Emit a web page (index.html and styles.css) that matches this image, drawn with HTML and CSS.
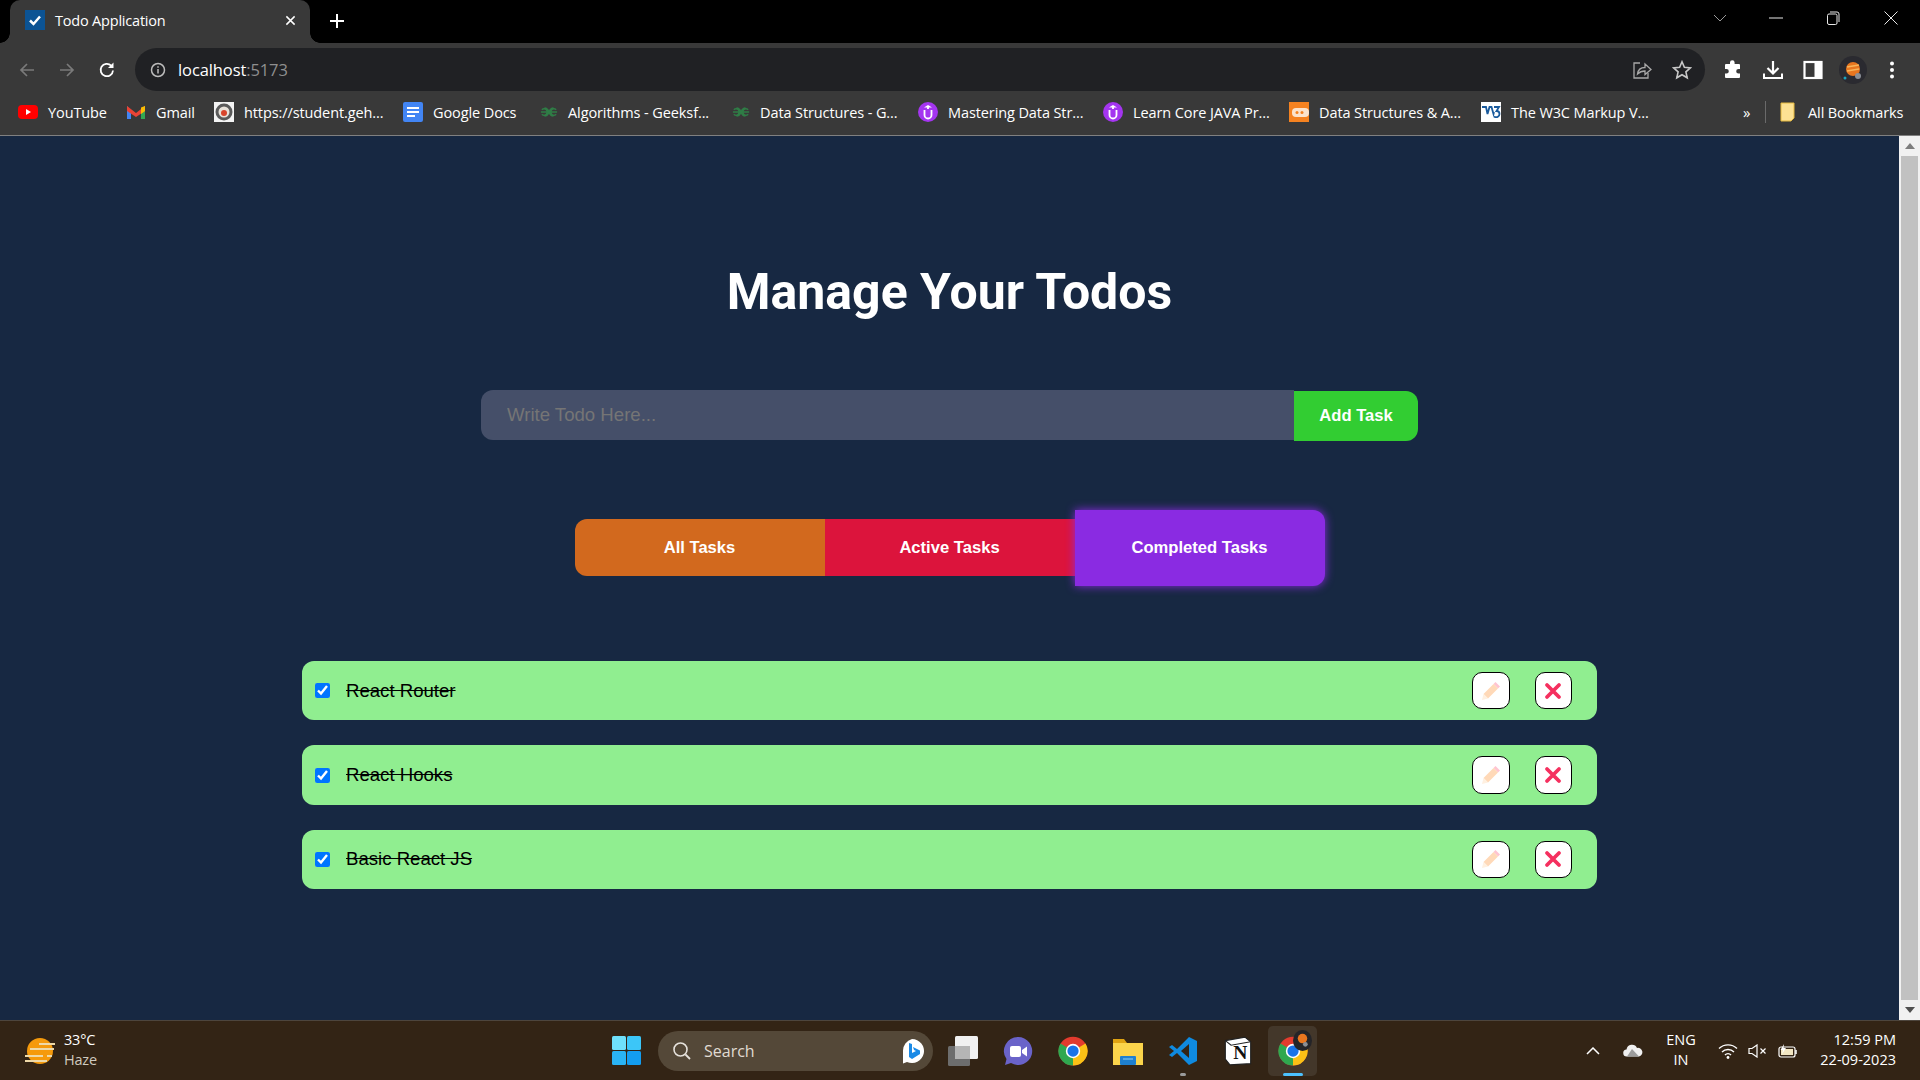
FILE: index.html
```html
<!DOCTYPE html>
<html lang="en">
<head>
  <meta charset="UTF-8" />
  <meta name="viewport" content="width=device-width, initial-scale=1.0"/>
  <title>Todo Application</title>
  <link rel="stylesheet" href="styles.css">
</head>
<body>
  <svg class="defs" width="0" height="0">
    <symbol id="chrome" viewBox="0 0 48 48">
      <circle cx="24" cy="24" r="23" fill="#e33b2e"/>
      <path d="M24 24 L44 12 A23 23 0 0 1 24 47 Z" fill="#fbc116"/>
      <path d="M24 24 L24 47 A23 23 0 0 1 4 12 Z" fill="#2fa84f"/>
      <circle cx="24" cy="24" r="11.5" fill="#fff"/>
      <circle cx="24" cy="24" r="9" fill="#1a73e8"/>
    </symbol>
    <symbol id="gfg" viewBox="0 0 20 12">
      <path d="M1 6h18M2 3.500a3.500 3.500 0 1 1 0 5M18 3.500a3.500 3.500 0 1 0 0 5M10 6C9 3 7 1.500 5 1.500M10 6c1-3 3-4.500 5-4.500M10 6c-1 3-3 4.500-5 4.500M10 6c1 3 3 4.500 5 4.500" fill="none" stroke="#2f7d46" stroke-width="1.500"/>
    </symbol>
    <symbol id="udemy" viewBox="0 0 20 20">
      <circle cx="10" cy="10" r="10" fill="#a435f0"/>
      <path d="M6.500 8v5a3.500 3.500 0 0 0 7 0V8M10 7V4" fill="none" stroke="#fff" stroke-width="1.800"/>
      <path d="M10 3l4 2.500H6z" fill="#fff"/>
    </symbol>
    <symbol id="pencil" viewBox="0 0 20 20">
      <path d="M14.500 1l4.500 4.500-2 2L12.500 3z" fill="#ffc4d0"/>
      <path d="M12.500 3L17 7.500 7 17.500 2.500 13z" fill="#ffd9b8"/>
      <path d="M2.500 13L7 17.500 1 19z" fill="#fff0e0"/>
    </symbol>
    <symbol id="cross" viewBox="0 0 20 20">
      <path d="M4 4l12 12M16 4L4 16" fill="none" stroke="#f5305f" stroke-width="3.800" stroke-linecap="round"/>
    </symbol>
  </svg>

  <div class="tab-strip">
    <div class="tab">
      <svg class="favicon" viewBox="0 0 20 20">
        <rect width="20" height="20" fill="#0b5394"/>
        <path d="M5 10.500l3.500 3.500L15 6.500" fill="none" stroke="#fff" stroke-width="2.500"/>
      </svg>
      <span class="tab-title">Todo Application</span>
      <svg class="tab-close" viewBox="0 0 12 12"><path d="M1.500 1.500l9 9M10.500 1.500l-9 9" stroke="#fff" stroke-width="1.600"/></svg>
    </div>
    <svg class="new-tab" viewBox="0 0 16 16"><path d="M8 1v14M1 8h14" stroke="#fff" stroke-width="2"/></svg>
    <div class="window-controls">
      <svg viewBox="0 0 14 8" class="win-chevron"><path d="M1 1l6 6 6-6" fill="none" stroke="#9a9a9a"/></svg>
      <svg viewBox="0 0 14 14" class="win-min"><path d="M0 7h14" stroke="#e8e8e8"/></svg>
      <svg viewBox="0 0 14 14" class="win-restore"><rect x="1.500" y="3" width="9.500" height="10.500" rx="1.500" fill="none" stroke="#e8e8e8"/><path d="M4 1h7a2 2 0 0 1 2 2v8" fill="none" stroke="#e8e8e8"/></svg>
      <svg viewBox="0 0 14 14" class="win-close"><path d="M.5.5l13 13M13.500.5l-13 13" stroke="#e8e8e8"/></svg>
    </div>
  </div>

  <div class="toolbar">
    <div class="nav-buttons">
      <svg viewBox="0 0 18 18"><path d="M16 9H3M9 3L3 9l6 6" fill="none" stroke="#7a7a7a" stroke-width="1.700"/></svg>
      <svg viewBox="0 0 18 18"><path d="M2 9h13M9 3l6 6-6 6" fill="none" stroke="#7a7a7a" stroke-width="1.700"/></svg>
      <svg viewBox="0 0 18 18"><path d="M15 9.500A6.200 6.200 0 1 1 13.200 4.600" fill="none" stroke="#fff" stroke-width="1.800"/><path d="M15.500 1.500v5.500H10z" fill="#fff"/></svg>
    </div>
    <div class="address-bar">
      <svg class="info-icon" viewBox="0 0 16 16"><circle cx="8" cy="8" r="6.500" fill="none" stroke="#bdbdbd" stroke-width="1.500"/><path d="M8 7v4.500M8 4.300v1.500" stroke="#bdbdbd" stroke-width="1.500"/></svg>
      <span class="url">localhost<span class="url-port">:5173</span></span>
      <svg class="share-icon" viewBox="0 0 20 20"><path d="M8 3H2v15h14v-5" fill="none" stroke="#a8a8a8" stroke-width="1.300"/><path d="M5.500 14c.5-4 3.500-6.500 7.500-6.500V4l6 5.500-6 5V11c-3 0-5.500 1-7.500 3z" fill="none" stroke="#a8a8a8" stroke-width="1.300"/></svg>
      <svg class="star-icon" viewBox="0 0 20 20"><path d="M10 1.800l2.400 5.500 6 .6-4.500 4 1.300 5.900L10 14.700l-5.200 3.100 1.300-5.900-4.500-4 6-.6z" fill="none" stroke="#c8c8c8" stroke-width="1.600"/></svg>
    </div>
    <div class="toolbar-actions">
      <svg viewBox="0 0 20 20"><path d="M7 2.500a2.300 2.300 0 0 1 4.600 0V4H16a1 1 0 0 1 1 1v4h-1.500a2.300 2.300 0 0 0 0 4.600H17V17a1 1 0 0 1-1 1H3a1 1 0 0 1-1-1v-3.500h1.500a2.300 2.300 0 0 0 0-4.600H2V5a1 1 0 0 1 1-1h4z" fill="#fff"/></svg>
      <svg viewBox="0 0 20 20"><path d="M10 1v12M4.500 8l5.500 5.500L15.500 8" fill="none" stroke="#fff" stroke-width="2.200"/><path d="M1 13.500v4.500h18v-4.500" fill="none" stroke="#fff" stroke-width="2"/></svg>
      <svg viewBox="0 0 20 20"><rect x="1.500" y="2" width="17" height="16" fill="none" stroke="#fff" stroke-width="2.200"/><rect x="11.500" y="2" width="7" height="16" fill="#fff"/></svg>
      <svg class="avatar" viewBox="0 0 28 28">
        <circle cx="14" cy="14" r="14" fill="#2a2a30"/>
        <circle cx="14" cy="13" r="7" fill="#e8761f"/>
        <path d="M8 11l12-2M8 15l12-2" stroke="#f7b45a" stroke-width="1.500"/>
        <circle cx="19" cy="20" r="3" fill="#8a8f96"/>
        <circle cx="6" cy="22" r="1.500" fill="#19a5c0"/>
      </svg>
      <svg class="kebab" viewBox="0 0 6 20"><circle cx="3" cy="3.500" r="2" fill="#fff"/><circle cx="3" cy="10" r="2" fill="#fff"/><circle cx="3" cy="16.500" r="2" fill="#fff"/></svg>
    </div>
  </div>

  <div class="bookmarks">
    <a class="bookmark">
      <svg viewBox="0 0 20 20"><rect y="3" width="20" height="14" rx="4" fill="#f00"/><path d="M8 7l5 3-5 3z" fill="#fff"/></svg>
      <span>YouTube</span>
    </a>
    <a class="bookmark">
      <svg viewBox="0 0 20 20"><path d="M1 4v13h4V9z" fill="#4285f4"/><path d="M19 4v13h-4V9z" fill="#34a853"/><path d="M1 4l9 7 9-7v5l-9 6-9-6z" fill="#ea4335"/><path d="M15 5.500l4-1.500v5l-4 3z" fill="#fbbc04"/></svg>
      <span>Gmail</span>
    </a>
    <a class="bookmark">
      <svg viewBox="0 0 20 20"><rect width="20" height="20" fill="#f4f4f4"/><circle cx="10" cy="10" r="8.500" fill="#5a5a5a"/><circle cx="10" cy="10" r="5.500" fill="#e8e2da"/><circle cx="10" cy="11" r="3" fill="#d8452c"/></svg>
      <span>https://student.geh...</span>
    </a>
    <a class="bookmark">
      <svg viewBox="0 0 20 20"><rect width="20" height="20" rx="2" fill="#4285f4"/><path d="M4 6h12M4 10h12M4 14h8" stroke="#fff" stroke-width="2"/></svg>
      <span>Google Docs</span>
    </a>
    <a class="bookmark">
      <svg class="gfg-icon"><use href="#gfg"/></svg>
      <span>Algorithms - Geeksf...</span>
    </a>
    <a class="bookmark">
      <svg class="gfg-icon"><use href="#gfg"/></svg>
      <span>Data Structures - G...</span>
    </a>
    <a class="bookmark">
      <svg><use href="#udemy"/></svg>
      <span>Mastering Data Str...</span>
    </a>
    <a class="bookmark">
      <svg><use href="#udemy"/></svg>
      <span>Learn Core JAVA Pr...</span>
    </a>
    <a class="bookmark">
      <svg viewBox="0 0 20 20"><rect width="20" height="20" fill="#f58220"/><rect x="3" y="6" width="17" height="9" rx="4" fill="#fbe3cc"/><circle cx="8" cy="10.500" r="1.500" fill="#f58220"/><circle cx="13" cy="10.500" r="1.500" fill="#f58220"/></svg>
      <span>Data Structures &amp; A...</span>
    </a>
    <a class="bookmark">
      <svg viewBox="0 0 20 20"><rect width="20" height="20" fill="#fff"/><path d="M1 5h4l1.500 7L8.500 5h2l2 7 .5-2" fill="none" stroke="#1a5a9c" stroke-width="1.800"/><path d="M13 5h5l-2.500 4c2 0 3 1 3 3 0 3-3 4-5.500 2.500" fill="none" stroke="#1a5a9c" stroke-width="1.800"/></svg>
      <span>The W3C Markup V...</span>
    </a>
    <span class="bm-more">»</span>
    <span class="bm-sep"></span>
    <a class="bookmark bm-all">
      <svg class="folder-icon" viewBox="0 0 15 20"><path d="M1 1h13v15l-3 3H1z" fill="#fde293" stroke="#e5b93f"/></svg>
      <span>All Bookmarks</span>
    </a>
  </div>

  <div class="viewport">
    <main class="app">
      <h1 class="app-title">Manage Your Todos</h1>

      <form class="todo-form">
        <input class="todo-input" type="text" placeholder="Write Todo Here..." />
        <button class="add-btn" type="button">Add Task</button>
      </form>

      <div class="filters">
        <button class="filter-btn filter-all" type="button">All Tasks</button>
        <button class="filter-btn filter-active" type="button">Active Tasks</button>
        <button class="filter-btn filter-completed" type="button">Completed Tasks</button>
      </div>

      <ul class="todo-list">
        <li class="todo-item">
          <input class="todo-check" type="checkbox" checked />
          <span class="todo-text">React Router</span>
          <button class="icon-btn" type="button"><svg><use href="#pencil"/></svg></button>
          <button class="icon-btn" type="button"><svg><use href="#cross"/></svg></button>
        </li>
        <li class="todo-item">
          <input class="todo-check" type="checkbox" checked />
          <span class="todo-text">React Hooks</span>
          <button class="icon-btn" type="button"><svg><use href="#pencil"/></svg></button>
          <button class="icon-btn" type="button"><svg><use href="#cross"/></svg></button>
        </li>
        <li class="todo-item">
          <input class="todo-check" type="checkbox" checked />
          <span class="todo-text">Basic React JS</span>
          <button class="icon-btn" type="button"><svg><use href="#pencil"/></svg></button>
          <button class="icon-btn" type="button"><svg><use href="#cross"/></svg></button>
        </li>
      </ul>
    </main>

    <div class="scrollbar">
      <div class="scroll-arrow"><span class="arrow-up"></span></div>
      <div class="scroll-thumb"></div>
      <div class="scroll-arrow"><span class="arrow-down"></span></div>
    </div>
  </div>

  <footer class="taskbar">
    <div class="weather">
      <svg class="weather-icon" viewBox="0 0 30 26">
        <ellipse cx="15" cy="13" rx="13" ry="13" fill="#f59a0c"/>
        <path d="M14 6h16M5 11h24M0 18h18M22 18h5M0 23h22" stroke="#eed9a8" stroke-width="2.200"/>
      </svg>
      <div class="weather-text">
        <span class="weather-temp">33°C</span>
        <span class="weather-desc">Haze</span>
      </div>
    </div>

    <svg class="start" viewBox="0 0 29 29">
      <rect width="14" height="14" rx="1.500" fill="#6fe0fb"/>
      <rect x="15" width="14" height="14" rx="1.500" fill="#3cc6f8"/>
      <rect y="15" width="14" height="14" rx="1.500" fill="#2ab4f5"/>
      <rect x="15" y="15" width="14" height="14" rx="1.500" fill="#139df0"/>
    </svg>

    <div class="search">
      <svg class="search-icon" viewBox="0 0 20 20"><circle cx="8.500" cy="8.500" r="6.500" fill="none" stroke="#e6e2dc" stroke-width="1.600"/><path d="M13.500 13.500L18 18" stroke="#e6e2dc" stroke-width="1.800"/></svg>
      <span>Search</span>
      <svg class="bing" viewBox="0 0 26 26"><path d="M13 1a12 12 0 1 1-5 22.900L4 25.500V13A12 12 0 0 1 13 1z" fill="#fff"/><path d="M10 5l3 1v9l4-2-2-1-1-3 7 3.500v3.500l-8 5-3-2z" fill="#1a8ae6"/></svg>
    </div>

    <div class="task-icons">
      <div class="task-item">
        <svg viewBox="0 0 30 30"><rect y="10" width="22" height="20" rx="1.500" fill="#6d6d6d"/><rect x="7" width="23" height="23" rx="1.500" fill="#f1f1f1"/><rect x="7" y="10" width="15" height="13" fill="#b5b5b5"/></svg>
      </div>
      <div class="task-item">
        <svg viewBox="0 0 30 30"><path d="M15 1a14 14 0 1 1-7 26L2 29l1.500-6A14 14 0 0 1 15 1z" fill="#6a63c9"/><rect x="7" y="10" width="11" height="11" rx="2" fill="#fff"/><path d="M19 14l5-3.500v10L19 17z" fill="#fff"/></svg>
      </div>
      <div class="task-item">
        <svg><use href="#chrome"/></svg>
      </div>
      <div class="task-item">
        <svg viewBox="0 0 30 30"><path d="M0 3h11l3 4h-14z" fill="#e0a312"/><rect y="7" width="30" height="22" fill="#fbd44b"/><rect x="7" y="20" width="16" height="9" rx="1" fill="#1e80d0"/><path d="M10 23h10" stroke="#8fd0f5"/></svg>
      </div>
      <div class="task-item task-open">
        <svg viewBox="0 0 30 30"><path d="M21 1l8 4v20l-8 4L9 17l-5 4-3-2 5-4-5-4 3-2 5 4z" fill="#0f8ae0"/><path d="M21 8v14l-8-7z" fill="#332415"/></svg>
      </div>
      <div class="task-item">
        <svg viewBox="0 0 26 26"><path d="M2 4l17-3 5 4v19l-18 1-4-5z" fill="#fff" stroke="#222" stroke-width="1"/><path d="M2 4l5 4 17-3" fill="none" stroke="#222" stroke-width="1"/><text class="notion-n" x="15" y="20" text-anchor="middle">N</text></svg>
      </div>
      <div class="task-item task-active">
        <svg><use href="#chrome"/></svg>
        <svg class="task-badge" viewBox="0 0 20 22"><ellipse cx="10" cy="11" rx="10" ry="11" fill="#242428"/><circle cx="10" cy="9" r="5" fill="#e8761f"/><circle cx="13" cy="15" r="2.500" fill="#8a8f96"/></svg>
      </div>
    </div>

    <div class="tray">
      <svg class="tray-chevron" viewBox="0 0 14 8"><path d="M1 7l6-6 6 6" fill="none" stroke="#fff" stroke-width="1.500"/></svg>
      <svg class="tray-cloud" viewBox="0 0 20 13"><path d="M4 12.500a3.500 3.500 0 0 1-.5-7A5.500 5.500 0 0 1 14 4a4.300 4.300 0 0 1 2 8.500z" fill="#f0f0f0"/><path d="M9 5l7 7.500H4z" fill="#9c9c9c"/></svg>
      <div class="tray-lang"><span>ENG</span><span>IN</span></div>
      <svg class="tray-wifi" viewBox="0 0 20 16"><path d="M1 5.500a13 13 0 0 1 18 0M4 9a8.500 8.500 0 0 1 12 0M7 12a4 4 0 0 1 6 0" fill="none" stroke="#fff" stroke-width="1.400"/><circle cx="10" cy="14.500" r="1.400" fill="#fff"/></svg>
      <svg class="tray-sound" viewBox="0 0 20 14"><path d="M1 4.500h3L9 1v12L4 9.500H1z" fill="none" stroke="#fff" stroke-width="1.200"/><path d="M12.500 4.500l5 5M17.500 4.500l-5 5" stroke="#fff" stroke-width="1.200"/></svg>
      <svg class="tray-battery" viewBox="0 0 20 14"><rect x="1" y="3" width="16" height="10" rx="2" fill="none" stroke="#fff" stroke-width="1.200"/><rect x="3" y="5" width="12" height="6" fill="#f2e6c2"/><path d="M18 6v4" stroke="#fff" stroke-width="1.500"/><path d="M6 0L2.500 6H5L4 10l4-6H5.500z" fill="#fff"/></svg>
      <div class="tray-clock"><span>12:59 PM</span><span>22-09-2023</span></div>
    </div>
  </footer>
</body>
</html>
```

FILE: styles.css
```css
* {
  box-sizing: border-box;
}

html, body {
  margin: 0;
  height: 100%;
}

body {
  display: flex;
  flex-direction: column;
  height: 1080px;
  overflow: hidden;
  background-color: #172842;
  font-family: "Open Sans", "Noto Sans", sans-serif;
  color: #fff;
}

svg {
  display: block;
  flex: none;
}

.defs {
  position: absolute;
}

/* browser chrome */
.tab-strip {
  display: flex;
  align-items: center;
  height: 43px;
  padding-left: 10px;
  background-color: #000;
}

.tab {
  position: relative;
  display: flex;
  align-items: center;
  width: 300px;
  height: 43px;
  padding: 0 14px 3px 15px;
  background-color: #393939;
  border-radius: 10px 10px 0 0;
}

/* the little flares at the tab's bottom corners */
.tab::before,
.tab::after {
  content: "";
  position: absolute;
  bottom: 0;
  width: 10px;
  height: 10px;
}

.tab::before {
  left: -10px;
  background: radial-gradient(circle at 0 0, #000 9.5px, #393939 10px);
}

.tab::after {
  right: -10px;
  background: radial-gradient(circle at 100% 0, #000 9.5px, #393939 10px);
}

.favicon {
  width: 20px;
  height: 20px;
}

.tab-title {
  margin-left: 10px;
  font-size: 14.5px;
  letter-spacing: -0.2px;
  flex: 1;
}

.tab-close {
  width: 11px;
  height: 11px;
}

.new-tab {
  width: 16px;
  height: 16px;
  margin-left: 19px;
  margin-bottom: 2px;
}

.window-controls {
  display: flex;
  align-items: center;
  align-self: flex-start;
  margin-left: auto;
  height: 36px;
}

.win-chevron {
  width: 14px;
  height: 8px;
}

.win-min {
  width: 14px;
  height: 14px;
  margin-left: 42px;
}

.win-restore {
  width: 14px;
  height: 16px;
  margin-left: 43px;
}

.win-close {
  width: 14px;
  height: 14px;
  margin-left: 44px;
  margin-right: 22px;
}

.toolbar {
  display: flex;
  align-items: center;
  height: 48px;
  padding-top: 5px;
  background-color: #393939;
}

.nav-buttons {
  display: flex;
  align-items: center;
  gap: 22px;
  width: 135px;
  padding-left: 18px;
}

.nav-buttons svg {
  width: 18px;
  height: 18px;
}

.address-bar {
  display: flex;
  align-items: center;
  width: 1570px;
  height: 43px;
  padding: 0 13px 0 15px;
  background-color: #202124;
  border-radius: 22px;
}

.info-icon {
  width: 16px;
  height: 16px;
}

.url {
  margin-left: 12px;
  margin-bottom: 1px;
  font-size: 16.5px;
  letter-spacing: -0.1px;
  flex: 1;
}

.url-port {
  color: #8f8f8f;
}

.share-icon {
  width: 20px;
  height: 20px;
}

.star-icon {
  width: 20px;
  height: 20px;
  margin-left: 20px;
}

.toolbar-actions {
  display: flex;
  align-items: center;
  padding-left: 18px;
}

.toolbar-actions svg {
  width: 20px;
  height: 20px;
  margin-right: 20px;
}

.toolbar-actions .avatar {
  width: 28px;
  height: 28px;
  margin-right: 0;
  margin-left: -4px;
}

.toolbar-actions .kebab {
  width: 6px;
  margin: 0 0 0 22px;
}

.bookmarks {
  display: grid;
  grid-template-columns: 108px 88px 189px 137px 192px 186px 185px 186px 192px 262px 22px 15px auto;
  align-items: center;
  height: 45px;
  padding: 0 0 2px 18px;
  background-color: #393939;
  border-bottom: 1px solid #808080;
  font-size: 14.5px;
  letter-spacing: -0.1px;
}

.bookmark {
  display: flex;
  align-items: center;
  gap: 10px;
  white-space: nowrap;
}

.bookmark svg {
  width: 20px;
  height: 20px;
}

.bookmark .gfg-icon {
  width: 18px;
}

.bookmark .folder-icon {
  width: 15px;
}

.bm-all {
  gap: 13px;
}

.bm-more {
  font-size: 15px;
}

.bm-sep {
  width: 1px;
  height: 22px;
  background-color: #6a6a6a;
}

/* page */
.viewport {
  display: flex;
  flex: 1;
  min-height: 0;
}

.app {
  flex: 1;
  display: flex;
  flex-direction: column;
  align-items: center;
  padding-top: 132px;
  font-family: "Liberation Sans", Arial, sans-serif;
}

.app-title {
  margin: 0 0 74px;
  font-family: Roboto, sans-serif;
  font-size: 50px;
  line-height: 48px;
  font-weight: 700;
}

.todo-form {
  display: flex;
  width: 937px;
  height: 51px;
  margin-bottom: 69px;
}

.todo-input {
  flex: 1;
  height: 50px;
  padding: 0 26px;
  border: none;
  border-radius: 12px 0 0 12px;
  background-color: #454f69;
  color: #fff;
  font-family: inherit;
  font-size: 18.6px;
  outline: none;
}

.todo-input::placeholder {
  color: #757575;
}

.add-btn {
  width: 124px;
  height: 50px;
  margin-top: 1px;
  border: none;
  border-radius: 0 12px 12px 0;
  background-color: #32cd32;
  color: #fff;
  font-family: inherit;
  font-size: 16.6px;
  font-weight: bold;
}

.filters {
  display: flex;
  align-items: flex-start;
  height: 76px;
  margin-bottom: 75px;
}

.filter-btn {
  width: 250px;
  height: 57px;
  margin-top: 9px;
  border: none;
  color: #fff;
  font-family: inherit;
  font-size: 16.6px;
  font-weight: bold;
}

.filter-all {
  background-color: #d2691e;
  border-radius: 12px 0 0 12px;
}

.filter-active {
  background-color: #dc143c;
}

.filter-completed {
  height: 76px;
  margin-top: 0;
  background-color: #8a2be2;
  border-radius: 0 12px 12px 0;
  box-shadow: 0 0 10px #8a2be2;
}

.todo-list {
  display: flex;
  flex-direction: column;
  gap: 25px;
  width: 1295px;
  margin: 0;
  padding: 0;
  list-style: none;
}

.todo-item {
  display: flex;
  align-items: center;
  height: 59.4px;
  padding: 0 25px 0 13px;
  background-color: #90ee90;
  border-radius: 12px;
  color: #000;
}

.todo-check {
  width: 15px;
  height: 15px;
  margin: 0 16px 0 0;
}

.todo-text {
  flex: 1;
  font-size: 18.6px;
  text-decoration: line-through;
}

.icon-btn {
  display: flex;
  align-items: center;
  justify-content: center;
  width: 37.500px;
  height: 37.500px;
  padding: 0;
  margin-left: 25px;
  border: 1px solid #000;
  border-radius: 10px;
  background-color: #fff;
}

.icon-btn svg {
  width: 20px;
  height: 20px;
}

.scrollbar {
  display: flex;
  flex-direction: column;
  width: 21px;
  background-color: #f1f1f1;
}

.scroll-arrow {
  display: flex;
  align-items: center;
  justify-content: center;
  height: 20px;
}

.arrow-up {
  border: 5px solid transparent;
  border-top: 0;
  border-bottom: 6px solid #7d7d7d;
}

.arrow-down {
  border: 5px solid transparent;
  border-bottom: 0;
  border-top: 6px solid #505050;
}

.scroll-thumb {
  flex: 1;
  margin: 0 2px;
  background-color: #c1c1c1;
}

/* windows taskbar */
.taskbar {
  position: relative;
  display: flex;
  align-items: center;
  height: 60px;
  background-color: #332415;
  border-top: 1px solid #4d453d;
  font-size: 14.5px;
}

.weather {
  display: flex;
  align-items: center;
  width: 612px;
  padding-left: 25px;
}

.weather-icon {
  width: 30px;
  height: 26px;
}

.weather-text {
  display: flex;
  flex-direction: column;
  margin: 0 0 2px 9px;
  line-height: 20px;
  letter-spacing: -0.2px;
}

.weather-desc {
  color: #cfcabf;
}

.start {
  width: 29px;
  height: 29px;
}

.search {
  display: flex;
  align-items: center;
  width: 275px;
  height: 40px;
  margin-left: 17px;
  padding: 0 8px 0 14px;
  background-color: #544838;
  border-radius: 20px;
  color: #e0dbd2;
  font-size: 16px;
}

.search-icon {
  width: 20px;
  height: 20px;
  margin-right: 12px;
}

.search span {
  flex: 1;
}

.bing {
  width: 26px;
  height: 26px;
}

.task-icons {
  display: flex;
  align-items: center;
  margin-left: 2px;
}

.task-item {
  position: relative;
  display: flex;
  align-items: center;
  justify-content: center;
  width: 55px;
  height: 50px;
}

.task-item svg {
  width: 30px;
  height: 30px;
}

.task-open::after,
.task-active::after {
  content: "";
  position: absolute;
  bottom: 0;
  height: 3px;
  border-radius: 2px;
}

.task-open::after {
  width: 6px;
  background-color: #9b9b9b;
}

.task-active::after {
  width: 20px;
  background-color: #4cc2ff;
}

.task-active {
  width: 49px;
  margin-left: 3px;
  background-color: #43372a;
  border-radius: 5px;
}

.task-item .task-badge {
  position: absolute;
  top: 4px;
  right: 5px;
  width: 19px;
  height: 21px;
}

.notion-n {
  font-family: "Liberation Serif", serif;
  font-size: 17px;
  font-weight: bold;
  fill: #111;
}

.tray {
  display: flex;
  align-items: center;
  margin-left: auto;
  padding-right: 24px;
}

.tray-chevron {
  width: 14px;
  height: 8px;
}

.tray-cloud {
  width: 20px;
  height: 13px;
  margin-left: 23px;
}

.tray-lang {
  display: flex;
  flex-direction: column;
  align-items: center;
  width: 40px;
  margin: 0 0 2px 18px;
  line-height: 20px;
}

.tray-wifi {
  width: 20px;
  height: 16px;
  margin-left: 17px;
}

.tray-sound {
  width: 20px;
  height: 14px;
  margin-left: 10px;
}

.tray-battery {
  width: 20px;
  height: 14px;
  margin-left: 10px;
}

.tray-clock {
  display: flex;
  flex-direction: column;
  align-items: flex-end;
  width: 90px;
  margin: 0 0 2px 8px;
  line-height: 20px;
}
```
